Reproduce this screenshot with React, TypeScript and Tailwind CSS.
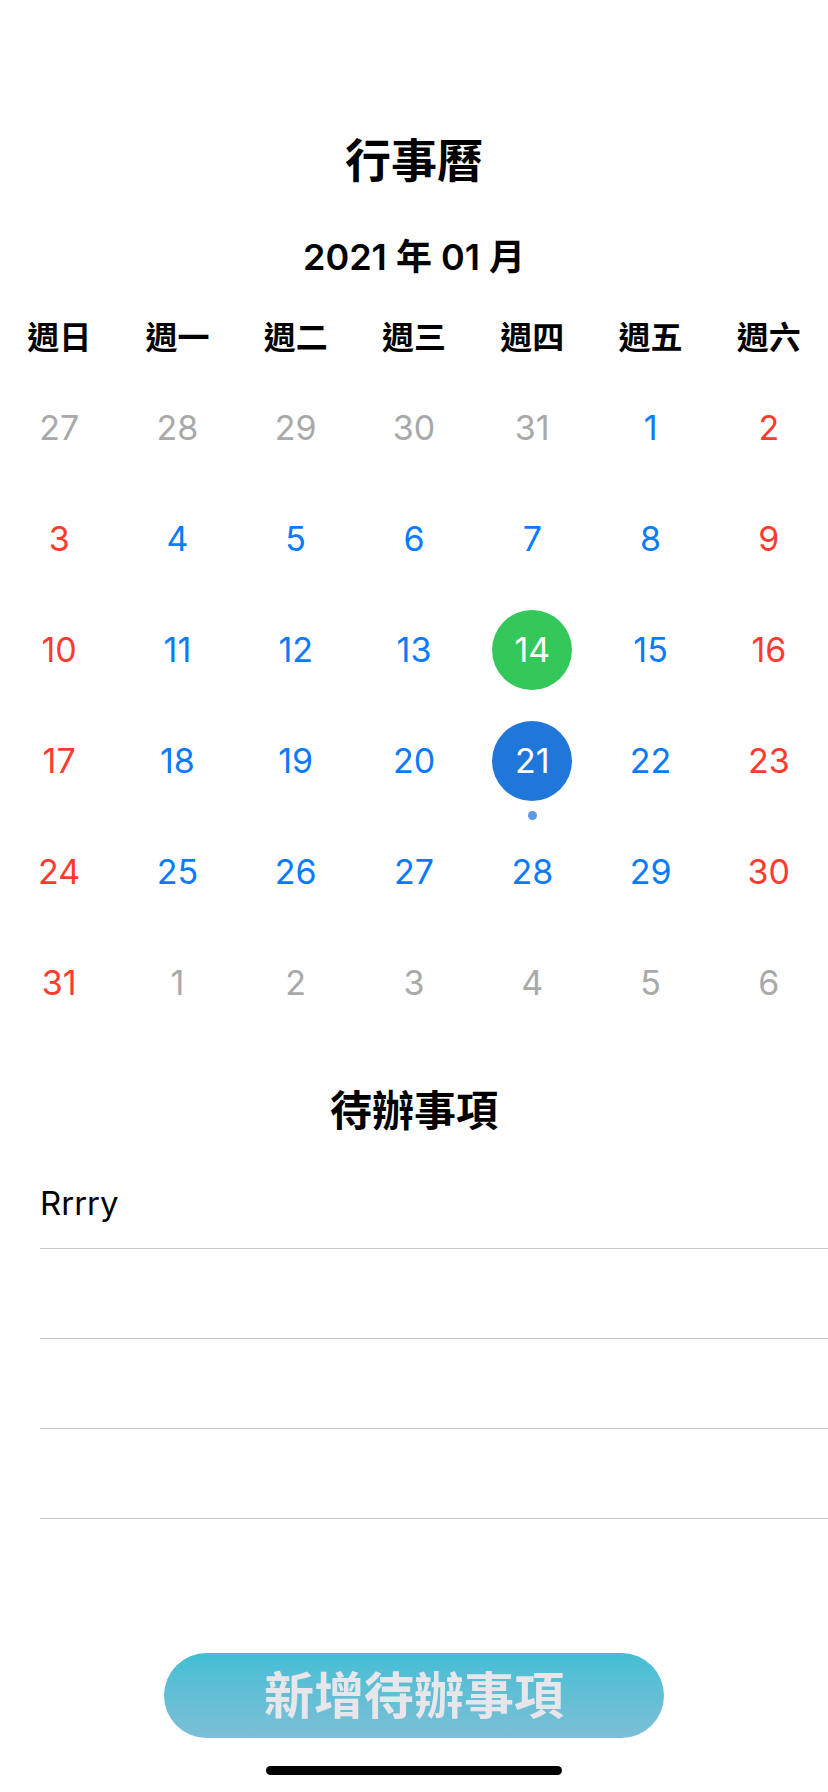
import React from 'react';

type Day = { n: number; kind: 'out' | 'weekend' | 'weekday' };

const weekdays = ['週日', '週一', '週二', '週三', '週四', '週五', '週六'];

function buildDays(): Day[] {
  const days: Day[] = [];
  [27, 28, 29, 30, 31].forEach((n) => days.push({ n, kind: 'out' }));
  for (let n = 1; n <= 31; n++) {
    const col = days.length % 7;
    days.push({ n, kind: col === 0 || col === 6 ? 'weekend' : 'weekday' });
  }
  for (let n = 1; days.length < 42; n++) days.push({ n, kind: 'out' });
  return days;
}

const todos = ['Rrrry', '', '', ''];

function DayCell({ day }: { day: Day }) {
  const isToday = day.kind !== 'out' && day.n === 14;
  const isSelected = day.kind !== 'out' && day.n === 21;

  if (isToday || isSelected) {
    return (
      <div className="relative flex h-[111px] items-center justify-center">
        <div
          className={`flex h-[80px] w-[80px] items-center justify-center rounded-full text-[34px] text-white ${
            isToday ? 'bg-[#34c759]' : 'bg-[#2176da]'
          }`}
        >
          {day.n}
        </div>
        {isSelected && (
          <div className="absolute bottom-[-4px] h-[9px] w-[9px] rounded-full bg-[#5b9be6]" />
        )}
      </div>
    );
  }

  const color =
    day.kind === 'out' ? 'text-[#a9a9a9]' : day.kind === 'weekend' ? 'text-[#ff3b30]' : 'text-[#0a7aff]';

  return (
    <div className={`flex h-[111px] items-center justify-center text-[34px] ${color}`}>{day.n}</div>
  );
}

export default function App() {
  const days = buildDays();

  return (
    <div className="relative flex h-[1792px] w-[828px] flex-col overflow-hidden bg-white font-[family-name:Inter,'Noto_Sans_CJK_TC',sans-serif] text-black">
      <h1 className="mt-[132px] text-center text-[46px] font-bold leading-[56px]">行事曆</h1>

      <div className="mt-[45px] text-center text-[36px] font-semibold leading-[48px]">2021 年 01 月</div>

      <div className="mt-[37px] grid grid-cols-7">
        {weekdays.map((w) => (
          <div key={w} className="text-center text-[32px] font-bold leading-[40px]">
            {w}
          </div>
        ))}
      </div>

      <div className="mt-[14px] grid grid-cols-7">
        {days.map((d, i) => (
          <DayCell key={i} day={d} />
        ))}
      </div>

      <h2 className="mt-[49px] text-center text-[42px] font-semibold leading-[48px]">待辦事項</h2>

      <div className="ml-[40px] mt-[24px] flex flex-col">
        {todos.map((t, i) => (
          <div key={i} className="flex h-[90px] items-center border-b border-[#c8c8c8] text-[33px]">
            {t}
          </div>
        ))}
      </div>

      <div className="mt-[134px] flex justify-center">
        <button className="h-[85px] w-[500px] rounded-full bg-gradient-to-b from-[#41bed5] to-[#7bbfd6] text-[50px] font-bold leading-none text-[#e6e6eb]">
          新增待辦事項
        </button>
      </div>

      <div className="absolute bottom-[17px] left-1/2 h-[9px] w-[296px] -translate-x-1/2 rounded-full bg-black" />
    </div>
  );
}
